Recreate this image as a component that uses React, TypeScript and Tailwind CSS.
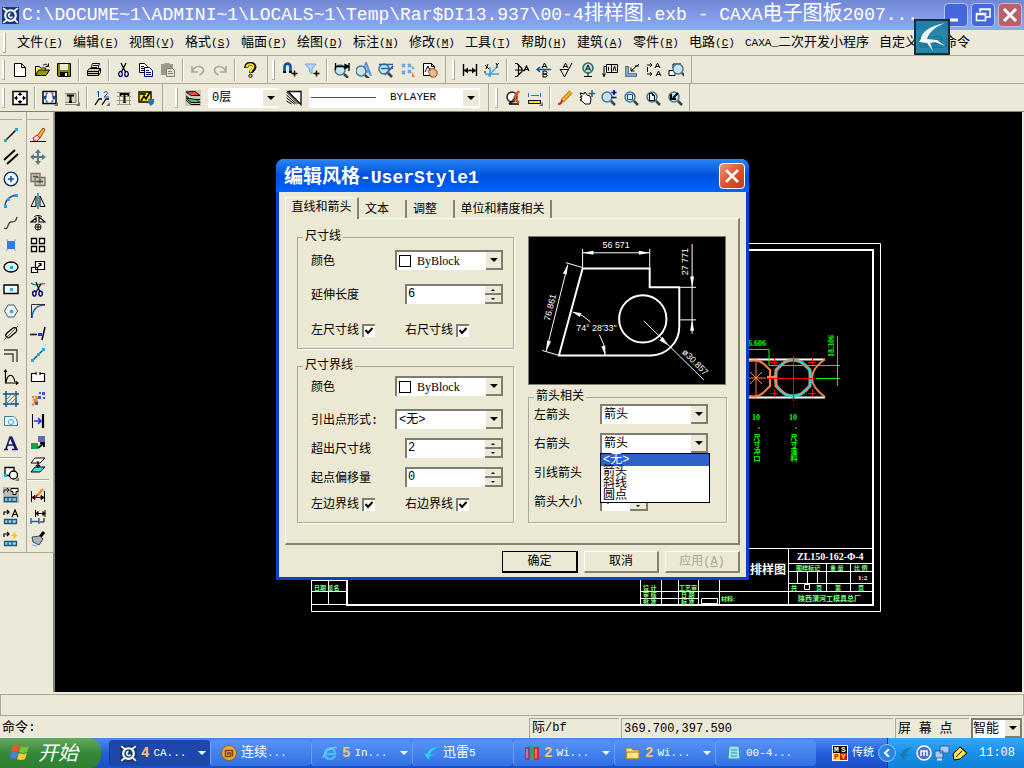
import { ReactNode } from "react";
import clsx from "clsx";

type LineProps = { d: string; c?: string; w?: number; f?: string };

const L = ({ d, c = "#000", w = 1, f = "none" }: LineProps) => (
	<path d={d} stroke={c} strokeWidth={w} fill={f} />
);

const Lens = ({ x = 7, y = 7 }: { x?: number; y?: number }) => (
	<>
		<circle cx={x} cy={y} r="5" fill="#c4e4f0" stroke="#47788c" strokeWidth="1.5" />
		<path d={`M${x + 4} ${y + 4}l4 4`} stroke="#34454c" strokeWidth="2.5" />
	</>
);

const Dot = ({ x, y }: { x: number; y: number }) => (
	<rect x={x - 1} y={y - 1} width="3" height="3" fill="#29a5e8" />
);

const icons: Record<string, ReactNode> = {
	新建: <L d="M2.500 1.500h7l4 4v9h-11zM9.500 1.500v4h4" f="#fff" />,
	打开: (
		<>
			<L d="M1.500 13.500v-9h4l1 1.500h5v2" f="#ffff7a" />
			<L d="M1.500 13.500l3-5.500h11l-3.500 5.500z" f="#9c9400" />
			<L d="M9 3.500c2-2 4-1.500 5 .5M14.500 1.500v3h-3" />
		</>
	),
	保存: (
		<>
			<L d="M1.500 1.500h13v13h-12l-1-1z" f="#848200" />
			<path d="M4 2h8v6H4z" fill="#ece9d8" />
			<path d="M4 10h8v4H4z" fill="#000" />
			<path d="M9 11h2v3H9z" fill="#fff" />
		</>
	),
	打印: (
		<>
			<L d="M4.500 7.500l2-6h7l-2 6" f="#fff" />
			<L d="M1.500 8.500l2-2h11l-2 3v4h-11z" f="#c8c8c0" />
			<L d="M1.500 9.500h11l2-3v4l-2 3M7 3.500h5M6 5.500h5M2 11.500h10" />
			<path d="M8 10h3v1H8z" fill="#ffe100" />
		</>
	),
	剪切: (
		<>
			<L d="M5 1l4.500 9M10 1L5.500 10" w={1.3} />
			<L d="M5 9.500c-3-.5-3 5-.5 5s2-4 .5-5zM10 9.500c3-.5 3 5 .5 5s-2-4-.5-5z" c="#000084" w={1.3} />
		</>
	),
	复制: (
		<>
			<L d="M1.500 1.500h5l3 3v6h-8zM3 4.500h3M3 6.500h5M3 8.500h5" f="#fff" />
			<L d="M6.500 5.500h5l3 3v6h-8zM8 8.500h3M8 10.500h5M8 12.500h5" f="#fff" c="#000084" />
		</>
	),
	粘贴: (
		<>
			<path d="M1 2h3l1-1h4l1 1h3v11H1z" fill="#9c9a88" />
			<L d="M6.500 6.500h6l2 2v6h-8zM8 9.500h4M8 11.500h5" f="#e4e1d0" c="#85836f" />
		</>
	),
	撤销: <L d="M2 4v6h6M2.500 9.500c2-7 11-6 11-1.500 0 2-1 3.500-4 5" c="#aaa897" w={1.6} />,
	重做: <L d="M14 4v6H8M13.500 9.500c-2-7-11-6-11-1.500 0 2 1 3.500 4 5" c="#aaa897" w={1.6} />,
	帮助: (
		<>
			<L d="M4 6c0-6 8.500-5 8.500-1 0 3-3.500 3-3.500 6" w={4} />
			<L d="M4.500 5.500c.5-4.500 7.500-4 7-.5-.5 2.500-3 2.500-3 5.500" c="#ffe600" w={2} />
			<circle cx="8.500" cy="13.800" r="1.600" fill="#ffe600" stroke="#000" />
		</>
	),
	智能捕捉: (
		<>
			<L d="M2.500 11V5c0-4.500 6-4.500 6 0v6" c="#0a4bb5" w={2.6} />
			<path d="M1 9h3v2H1zM7 9h3v2H7z" fill="#000" />
			<L d="M12.500 8.500v6M9.500 11.500h6" w={1.4} />
		</>
	),
	捕捉过滤: (
		<>
			<L d="M1 2h11L8 7v5L5.500 10V7z" c="#6fa6e6" f="#b6d6f8" />
			<L d="M12.500 8.500v6M9.500 11.500h6" w={1.4} />
		</>
	),
	动态查询: (
		<>
			<Lens x={6} y={8} />
			<L d="M1.500 1v7M15 1v8M2 4.500h13M15 4.500l-4-2v4z" f="#000" w={1.3} />
		</>
	),
	文字查找: (
		<>
			<L d="M6 14l4-13 5 13M7.500 9.500h6" c="#5f9ceb" w={2.4} />
			<Lens x={5} y={9} />
		</>
	),
	尺寸查询: (
		<>
			<Lens x={6} y={7} />
			<L d="M1 2.500h14M3 6.500h12M7 13l8-9" c="#2a5fa9" w={1.5} />
		</>
	),
	点选择: (
		<>
			<L d="M2 2l3 3M5 2L2 5M8 2l3 3M11 2L8 5M2 9l3 3M5 9l-3 3M8 8l3 3M11 8l-3 3M12 5l2 2" c="#6ca3ee" w={1.8} />
			<path d="M12 10l3 5h-3z" fill="#f07a32" />
		</>
	),
	拖动图纸: (
		<>
			<L d="M1.500 1.500h8l3 3v9h-11zM9.500 1.500v3h3M3 10l3-6 2 5" f="#fff" />
			<L d="M6 9l2-.5V6l2 1 2-1 1 2 2 1v4l-2 2H9z" f="#f4b78c" c="#9c4a20" />
		</>
	),
	标注: (
		<>
			<L d="M1.500 2v12M14.500 2v12M2 8.500h12" w={1.4} />
			<path d="M2 8.500l4-3v6zM14 8.500l-4-3v6z" />
		</>
	),
	坐标标注: (
		<>
			<L d="M6 15V5M1 12h14" c="#29a5e8" w={1.5} />
			<L d="M4 14l9-9" c="#29a5e8" w={1.3} />
			<L d="M1 3l4 4M4 2l-2 5M12 1l1 2 2-2M13 3v3M1 9v2" />
		</>
	),
	倒角标注: <L d="M1 1.500h2l5 5v3l-5 5H1M4.500 2v12M1 8h7l3 1M10 9l2.500-5L15 9M11 7.500h3" w={1.2} />,
	引出说明: (
		<>
			<L d="M6 6l2.500-5L11 6M7 4.500h3M7 9v6h3l1-1.500-1-1.500H7h3l1-1.500L10 9z" />
			<L d="M1 7.500h14M4 5L1 7.500 4 10" c="#0a4bb5" w={1.3} />
		</>
	),
	粗糙度: <L d="M2 7l4.500 8L14 1M2 7.500h9M5 6l2.500-5L10 6M6 4.500h3" />,
	基准代号: (
		<>
			<circle cx="8" cy="6" r="5" fill="#b6e2d6" stroke="#246a77" strokeWidth="1.500" />
			<L d="M5.500 8.500L8 3l2.500 5.500M6.500 7h3M8 11v3M4 14.500h8" />
		</>
	),
	形位公差: <L d="M4.500 2.500h11v8h-11zM9.500 3v7M5 4.500H2v10M.5 11.500L2 14.500l1.500-3M6.500 8.500V5M11 9l1.500-5L14 9" />,
	焊接符号: (
		<>
			<L d="M3 4v9h10" c="#2d5f91" w={3.5} />
			<L d="M3 5v8h9" c="#d9ecfa" />
			<L d="M15 2L7 9M7 5.500V9h3.500M11 4h4" />
		</>
	),
	剖切符号: <L d="M1 3h5M4 1l2 2-2 2M1 12h5M4 10l2 2-2 2M9 6l2.500-5L14 6M10 4.500h3M10 14l2.500-5 2.500 5M11 12.500h3M1.500 5v5" />,
	局部放大: (
		<>
			<L d="M1 8.500h6v5H1zM5 6V2h8" f="#fff" />
			<Lens x={10} y={7} />
		</>
	),
	全屏显示: (
		<>
			<L d="M1 1.500h14v13H1z" f="#fff" w={1.5} />
			<L d="M8 3v10M3 8h10" />
			<path d="M8 2l2.500 3h-5zM8 14l2.500-3h-5zM2 8l3-2.500v5zM14 8l-3-2.500v5z" />
			<path d="M6 6h4v4H6z" fill="#fff" />
		</>
	),
	图幅设置: (
		<>
			<L d="M1 1.500h13v12H1z" f="#fff" w={1.5} />
			<path d="M6 2l-1 3-2-1zM9 2l1 3 2-1zM6 13l-1-3-2 1zM9 13l1-3 2 1zM2 6l3-1-1 5-2-1zM13 6l-3-1 1 5 2-1z" fill="#174a9b" />
			<path d="M16 12v4h-4z" fill="#777" />
		</>
	),
	标题栏: (
		<>
			<L d="M1 3.500h11v9H1M14.500 1v14M1 14.500h14" c="#85836f" f="#d8d5c4" />
			<L d="M3 5.500h7M6.500 5v7M5 12h3" w={2} />
			<path d="M16 12v4h-4z" fill="#777" />
		</>
	),
	序号: (
		<>
			<L d="M3 2.500L4.500 1v6M10 3c1-3 5-1 3 1l-3 3h5" c="#0a4bb5" />
			<L d="M1 15l4-6h3M8 15l4-6h3" w={1.3} />
			<path d="M16 12v4h-4z" fill="#777" />
		</>
	),
	明细表: (
		<>
			<L d="M1 2.500h14M1 6.500h14M1 10.500h14M1 14.500h14M3.500 2v13M13.500 2v13" c="#9a9888" />
			<path d="M4 3h9v3h-1l-1-1H9.500v7l1 1h-4l1-1V5H6L5 6H4z" />
		</>
	),
	图库: (
		<>
			<L d="M1 2h12v10H1z" f="#ffee00" w={1.4} />
			<L d="M3 11l3-5 2 3 4-7M2 4h6" w={1.6} />
			<path d="M10 9h6v4l-3 3-3-3z" fill="#2c72ad" />
		</>
	),
	图层: (
		<>
			<path d="M0 0h16v16H0z" fill="#c9c6b6" />
			<L d="M1 2l9-.5 5 4H6z" f="#f3504c" />
			<L d="M1 6l5 3.500h9" f="#fff" />
			<L d="M1 8l5 4.500h9l-3-3z" f="#44c268" />
			<L d="M1 10l5 4.500h9" />
		</>
	),
	线型: (
		<>
			<L d="M2 1.500h13v13z" f="#fff" w={1.3} />
			<L d="M.5 2l12 12M.5 5l10 9M.5 8l8 6M.5 11l5 3" />
		</>
	),
	重画: (
		<>
			<circle cx="7" cy="7" r="5" fill="#fff" stroke="#222" strokeWidth="1.500" />
			<L d="M10 8l-6 6M4 14h10" w={1.3} />
			<L d="M9 8l5-7M10 9l4 4" c="#d25b1f" w={2.5} />
		</>
	),
	测量: (
		<>
			<L d="M1.500 3v4M13.500 3v4M4 5.500h8" c="#2a6fd0" />
			<L d="M1.500 10.500h12v3h-12z" f="#ffe600" />
			<path d="M16 12v4h-4z" fill="#777" />
		</>
	),
	画笔: (
		<>
			<L d="M5 11l9-9" c="#9a5a10" w={4} />
			<L d="M5 11l9-9" c="#ffb52d" w={2.5} />
			<L d="M1 14c3 0 4-1 4-4" c="#d02020" w={2} />
		</>
	),
	平移: (
		<>
			<L d="M1 3l4 1 1-2 2 3 3 1 1 3-1 5H6L3 11l-2-1 2-1-2-2h2z" f="#fff" />
			<L d="M13 0v7M9.500 3.500h7" c="#2d5f71" w={1.5} />
		</>
	),
	动态缩放: (
		<>
			<Lens x={6} y={7} />
			<L d="M13 0v5M10.500 2.500h5M10.500 7.500h5" c="#000084" w={1.6} />
		</>
	),
	窗口缩放: (
		<>
			<Lens />
			<L d="M4.500 4.500h5v5h-5z" c="#174a9b" f="#e6f6fb" />
		</>
	),
	显示全部: (
		<>
			<Lens />
			<L d="M4.500 3.500h3l2 2v5h-5zM7.500 3.500v2h2" f="#e6f6fb" />
		</>
	),
	显示回溯: (
		<>
			<Lens />
			<L d="M11 3L6 8M4 4v5h5" w={2} />
		</>
	),
	直线: (
		<>
			<L d="M2 14L14 2" w={1.5} />
			<Dot x={2} y={13} />
			<Dot x={13} y={2} />
		</>
	),
	平行线: <L d="M1 11L12 1M4 15L15 5" w={1.8} />,
	圆: (
		<>
			<circle cx="8" cy="8" r="6.800" fill="#eef8ff" stroke="#0a2d68" strokeWidth="1.300" />
			<L d="M8 5v6M5 8h6" c="#0a4bb5" w={1.6} />
		</>
	),
	圆弧: (
		<>
			<L d="M2 14C2 7 7 3 14 2" c="#174a9b" w={1.4} />
			<Dot x={2} y={13} />
			<Dot x={5} y={6} />
			<Dot x={13} y={2} />
		</>
	),
	样条: <L d="M1 13c5 3 3-6 7-6s5-1 6-5" c="#444" w={1.3} />,
	点: (
		<>
			<path d="M4 4h8v8H4z" fill="#2f7af0" />
			<L d="M3 3h2M11 3h2M3 13h2M11 13h2" c="#6da3ee" />
		</>
	),
	椭圆: (
		<>
			<ellipse cx="8" cy="8" rx="7" ry="5" fill="#dff1fa" stroke="#000" strokeWidth="1.300" />
			<Dot x={8} y={8} />
		</>
	),
	矩形: (
		<>
			<L d="M1 4h14v8.500H1z" f="#eef8ff" w={1.4} />
			<Dot x={8} y={8} />
		</>
	),
	正多边形: (
		<>
			<L d="M5 2h6l3.500 6L11 14H5L1.500 8z" f="#eef8ff" c="#465b68" />
			<Dot x={8} y={8} />
		</>
	),
	中心线: (
		<>
			<L d="M4 8l6-5c3-1 5 1 3 4l-6 5c-3 2-6-1-3-4z" w={1.2} />
			<L d="M1 15L15 1" c="#555" />
		</>
	),
	等距线: <L d="M1 3h13v12M1 7h9v8" c="#444" w={1.4} />,
	公式曲线: <L d="M2.500 1v13H15M1 3l1.500-2L4 3M13 12.500l2 1.500-2 1.500M3 13c2-9 7-9 9 0" w={1.2} />,
	剖面线: (
		<>
			<L d="M3 0v16M13 0v16M0 3h16M0 13h16" c="#0d4f7f" w={1.4} />
			<L d="M3 9l6-6M3 13L13 3M7 13l6-6" c="#3c94bd" />
		</>
	),
	填充: (
		<>
			<L d="M1.500 3.500h8c3 0 5 3 5 9h-13z" f="#e7f5fd" c="#4c7890" />
			<circle cx="8" cy="9" r="2.500" fill="#fff" stroke="#29a5e8" />
		</>
	),
	文字: (
		<>
			<L d="M3 14l4-12h1l5 12M5 10h6" c="#17176b" w={1.6} />
			<L d="M8 2l5 12" c="#17176b" w={2.8} />
			<L d="M1 14.500h4M9 14.500h6" c="#17176b" w={1.4} />
		</>
	),
	块: (
		<>
			<L d="M2 2.500h9v8H2z" f="#fff" w={1.3} />
			<circle cx="10.500" cy="10" r="4" fill="#fff" stroke="#000" strokeWidth="1.300" />
			<Dot x={2} y={10} />
			<path d="M16 12v4h-4z" fill="#777" />
		</>
	),
	提取图符: (
		<>
			<path d="M0 0h16v16H0z" fill="#bdbab0" />
			<L d="M1 6V3h5M4 1l2 2-2 2M8 1.500h7v3h-2v3h-3v-3H8z" f="#fff" />
			<L d="M1.500 10.500h12v4h-12zM5 10.500v4M9 10.500v4" c="#1b5b7f" f="#8fd9ee" w={1.3} />
		</>
	),
	标注编辑: (
		<>
			<L d="M1 6V3h5M4 1l2 2-2 2M9 8l3-7 3 7M10 5.500h4" w={1.2} />
			<L d="M1.500 10.500h12v4h-12zM5 10.500v4M9 10.500v4" c="#1b5b7f" f="#8fd9ee" w={1.3} />
		</>
	),
	驱动图符: (
		<>
			<L d="M1 6V3h5M4 1l2 2-2 2" w={1.2} />
			<path d="M13 0L8 5h3L9 9l6-5h-3z" fill="#ffc400" />
			<L d="M1.500 10.500h12v4h-12zM5 10.500v4M9 10.500v4" c="#1b5b7f" f="#8fd9ee" w={1.3} />
		</>
	),
	删除: (
		<>
			<L d="M7 9l6-8 2 1.500L10 11z" f="#ffb52d" c="#8c4a00" />
			<L d="M3 11l4-3 3 3-3 3H4z" f="#ffd0c4" c="#b02a2a" />
			<L d="M0 14.500h16" />
		</>
	),
	移动: (
		<>
			<L d="M8 2v12M2 8h12" c="#5a7b83" w={2} />
			<path d="M8 0l3 4H5zM8 16l3-4H5zM0 8l4-3v6zM16 8l-4-3v6z" fill="#5a7b83" />
		</>
	),
	平移复制: (
		<>
			<L d="M1 2.500h9v8H1zM5 6.500h10v8H5z" c="#77756a" f="#c9c6b6" w={1.3} />
			<L d="M7 10.500h6M10 8.500v4M3 5.500h5" c="#55534a" w={1.3} />
		</>
	),
	镜像: (
		<>
			<L d="M6 3v10.500H1zM10 3v10.500h5z" f="#e5eef2" />
			<L d="M8 0v16" c="#108090" w={1.4} />
		</>
	),
	旋转: (
		<>
			<L d="M1 7l5-4v4zM9 2v5h6z" f="#fff" w={1.2} />
			<L d="M4 2c2-2 6-2 8 0" />
			<circle cx="8" cy="12" r="3" fill="none" stroke="#000" />
			<L d="M8 9.500v5M5.500 12h5" />
		</>
	),
	阵列: <L d="M1.500 1.500h5v5h-5zM9.500 1.500h5v5h-5zM1.500 9.500h5v5h-5zM9.500 9.500h5v5h-5z" f="#fff" w={1.3} />,
	缩放: <L d="M5.500 2.500h9v8h-9zM1.500 8.500h6v5h-6zM8 8l3-3M8.500 4.500H11v2.500" f="#fff" w={1.2} />,
	裁剪: (
		<>
			<L d="M1 2c5 5 9-1 14 1" c="#108090" w={1.3} />
			<L d="M6 1l4 10M11 3L6 11" w={1.2} />
			<L d="M5 10c-3 0-3 4-1 5s3-4 1-5zM10 10c3 0 3 4 1 5s-3-4-1-5z" c="#000084" w={1.4} />
		</>
	),
	过渡: (
		<>
			<L d="M2 15C2 7 7 2 15 2" c="#1763c5" w={1.6} />
			<L d="M1.500 15V1.500H15" c="#333" strokeDasharray="1 1" {...{}} />
		</>
	),
	齐边: (
		<>
			<L d="M0 9.500h7M12 15l3-13" w={1.5} />
			<path d="M8 8h4v3H8z" fill="#1737e5" />
		</>
	),
	拉伸: (
		<>
			<L d="M2 14L14 2" c="#0c5f67" w={1.4} />
			<Dot x={2} y={13} />
			<Dot x={8} y={7} />
			<Dot x={13} y={2} />
		</>
	),
	打断: <L d="M6 4.500H1.500v8h13v-8H10M6 3v3M10 3v3" f="#fff" w={1.2} />,
	打散: (
		<>
			<L d="M2 6h2M6 5l1 3M3 9l4-1M4 12l3-3M7 10v3M2 14l2-1" c="#ee7b10" w={2.2} />
			<path d="M8 5h3v3H8zM12 1h3v3h-3zM9 1h2v2H9zM13 6h2v2h-2zM5 11h3v3H5z" fill="#3359d7" />
		</>
	),
	延伸: (
		<>
			<L d="M2.500 1v14" />
			<L d="M13 1v14" w={2.2} />
			<L d="M4 8h7M8 5l3 3-3 3" c="#1737e5" w={1.6} />
		</>
	),
	格式刷: (
		<>
			<path d="M1 8h7v6H1z" fill="#16a04a" />
			<path d="M8 1h7v6H8z" fill="#636baf" />
			<L d="M8 13l6-5M10 8h4v4" w={1.8} />
		</>
	),
	图层转换: (
		<>
			<L d="M5 1h10l-5 5H1z" f="#fff" />
			<L d="M5 10h10l-5 5H1z" f="#3fe0e6" />
			<L d="M8 4v6M6 8l2 2 2-2" w={1.3} />
		</>
	),
	标注修改: (
		<>
			<L d="M1.500 4v11M14.500 4v11M2 10.500h12M2 10.500l3-2v4zM14 10.500l-3-2v4z" f="#000" />
			<L d="M7 9l6-7" c="#ee8a30" w={2.5} />
			<L d="M5 11l2-3" c="#c02020" w={2} />
		</>
	),
	尺寸驱动: (
		<>
			<L d="M5.500 1v7M15 1v7M6 4.500h9M6 4.500l2-2v4zM15 4.500l-2-2v4z" f="#000" />
			<L d="M1 9v6M9 9v6M1 12.500h8" c="#1763c5" w={1.4} />
			<L d="M14 9v4h-4" />
		</>
	),
	特性匹配: (
		<>
			<L d="M10 6l4-5" w={3} />
			<L d="M2 6l8-1 3 3-4 6-6-3z" f="#a5b4bc" c="#3b4b53" />
			<L d="M2 14l5 1" c="#7aa6f0" />
		</>
	),
};

const IconButton = ({ name }: { name: string }) => (
	<button aria-label={name} className="flex size-[22px] shrink-0 items-center justify-center">
		<svg viewBox="0 0 16 16" className="size-4">
			{icons[name]}
		</svg>
	</button>
);

const Sep = () => (
	<span className="mx-[3px] h-[22px] w-0.5 shrink-0 border-l border-[#aca899] bg-white" />
);

const Grip = () => (
	<span className="mr-1 h-5 w-[3px] shrink-0 border-r border-b border-[#aca899] bg-white" />
);

const Group = ({ names, className }: { names: string[]; className: string }) => (
	<div className={clsx("flex h-full items-center border-r border-[#aca899]", className)}>
		<Grip />
		{names.map((n, i) => (n === "|" ? <Sep key={i} /> : <IconButton key={i} name={n} />))}
	</div>
);

const SideBar = ({ names }: { names: string[] }) => (
	<div className="flex flex-col items-center border-r border-[#aca899] pt-1 pr-1">
		<span className="mb-1 h-1 w-full border-b border-[#b5b27e]" />
		{names.map((n, i) =>
			n === "|" ? (
				<span key={i} className="my-[3px] h-0.5 w-full border-t border-[#aca899] bg-white" />
			) : (
				<IconButton key={i} name={n} />
			)
		)}
	</div>
);

const isCjk = (s: string) => /[^\x00-\xff]/.test(s);

/* Latin runs are set a bit smaller so they take half the width of a Han glyph */
const Mixed = ({ text, latin, cjk }: { text: string; latin: string; cjk: string }) => (
	<>
		{text.split(/([^\x00-\xff]+)/).map((part, i) => (
			<span key={i} className={isCjk(part) ? cjk : latin}>
				{part}
			</span>
		))}
	</>
);

const menus: [string, string][] = [
	["文件", "F"],
	["编辑", "E"],
	["视图", "V"],
	["格式", "S"],
	["幅面", "P"],
	["绘图", "D"],
	["标注", "N"],
	["修改", "M"],
	["工具", "T"],
	["帮助", "H"],
	["建筑", "A"],
	["零件", "R"],
	["电路", "C"],
];

const Arrow = () => (
	<span className="flex h-full w-[17px] shrink-0 items-center justify-center border-r-2 border-b-2 border-[#7f7d70] bg-[#ece9d8]">
		<svg viewBox="0 0 8 4" className="h-1 w-2">
			<path d="M0 0h8L4 4z" />
		</svg>
	</span>
);

const Combo = ({
	id,
	value,
	swatch,
	options = [],
}: {
	id: string;
	value: string;
	swatch?: boolean;
	options?: string[];
}) => (
	<div className="flex h-5 w-[108px] items-center border-t-2 border-l-2 border-[#7f7d70] bg-white">
		{swatch && <span className="ml-0.5 size-3 shrink-0 border border-black" />}
		<select
			id={id}
			defaultValue={value}
			className={clsx(
				"h-full min-w-0 flex-1 appearance-none bg-transparent outline-none",
				swatch ? "pl-1.5 font-['Liberation_Serif',serif]" : "pl-0.5"
			)}>
			{[value, ...options].map((o) => (
				<option key={o}>{o}</option>
			))}
		</select>
		<Arrow />
	</div>
);

const Spin = ({ id, value, className }: { id: string; value: string; className: string }) => (
	<div className={clsx("flex h-5 border-t-2 border-l-2 border-[#7f7d70] bg-white", className)}>
		<input id={id} defaultValue={value} className="h-4 min-w-0 flex-1 pl-px outline-none" />
		<span className="flex w-[18px] shrink-0 flex-col">
			{["M0 2h4L2 0z", "M0 0h4L2 2z"].map((d, i) => (
				<button
					key={d}
					aria-label={i ? "减" : "加"}
					className="flex flex-1 items-center justify-center border-r-2 border-b-2 border-[#7f7d70] bg-[#ece9d8]">
					<svg viewBox="0 0 4 2" className="h-0.5 w-1">
						<path d={d} />
					</svg>
				</button>
			))}
		</span>
	</div>
);

const Row = ({ id, label, children }: { id: string; label: string; children: ReactNode }) => (
	<div className="flex h-[22px] items-center justify-between">
		<label htmlFor={id} className="pt-[3px]">
			{label}
		</label>
		{children}
	</div>
);

const Check = ({ label }: { label: string }) => (
	<label className="flex w-[94px] items-center gap-[3px]">
		<span className="pt-0.5">{label}</span>
		<span className="grid size-[13px] border-t-2 border-l-2 border-[#7f7d70] bg-white">
			<input
				type="checkbox"
				defaultChecked
				className="peer col-start-1 row-start-1 size-full appearance-none"
			/>
			<svg
				viewBox="0 0 10 10"
				className="pointer-events-none invisible col-start-1 row-start-1 size-[10px] peer-checked:visible">
				<path d="M1.500 4l2.500 3 4.500-5" fill="none" stroke="#000" strokeWidth="2" />
			</svg>
		</span>
	</label>
);

const Box = ({
	title,
	className,
	children,
}: {
	title: string;
	className: string;
	children: ReactNode;
}) => (
	<fieldset
		className={clsx("min-w-0 border border-[#aca899] pl-[5px] shadow-[1px_1px_0_#fff]", className)}>
		<legend className="h-3 px-0.5 leading-3">{title}</legend>
		{children}
	</fieldset>
);

const Preview = () => (
	<svg
		viewBox="0 0 198 149"
		className="h-[149px] w-[198px] border border-[#7f7d70] bg-black font-['Liberation_Sans',sans-serif]"
		stroke="#fff"
		fill="none">
		<path d="M54 32h68v19h30v40a29 29 0 0 1-28 29H30z" strokeWidth="2" />
		<circle cx="115" cy="83" r="24" strokeWidth="2" />
		<path d="M54 32V12M122 32V12M54 16h68M165 7v91M153 51h16M153 84h16M39 28L17 116M37 26l17 5M13 115l17 5M44 76q10 2 18 10M71 99q6 10 6 21M116 85l61 60" />
		<g fill="#fff" stroke="none">
			<path d="M54 16l11-2v4zM122 16l-11-2v4zM165 51l-2-11h4zM165 84l-2 11h4zM39 28l-5 9 4 1zM17 116l1-11 4 1zM44 76l9 1-2 4zM77 120l-4-9 4-1zM141 110l-9-5 3-4z" />
			<g fontSize="9" textAnchor="middle">
				<text x="88" y="11">56 571</text>
				<text transform="translate(161 25) rotate(-90)">27 771</text>
				<text transform="translate(24 72) rotate(-76)">76.861</text>
				<text x="68" y="95">74° 28'33"</text>
				<text transform="translate(166 129) rotate(45)">ø30.857</text>
			</g>
		</g>
	</svg>
);

const Drawing = () => (
	<svg
		viewBox="0 0 570 369"
		className="absolute top-[131px] left-64 h-[369px] w-[570px] font-['Liberation_Serif','Noto_Sans_CJK_SC',serif]"
		fill="none"
		stroke="#fff">
		<path d="M.5.5h569v368H.5z" />
		<path d="M36 7h526v355H36z" strokeWidth="2" />
		<path d="M0 348.500h36M0 361.500h36M17.500 337v25M.5 337.500h36" />
		<path d="M438 305.500h124M477.500 305v57M477 320.500h85M477 328.500h85M477 340.500h85M329 348.500h233M515.500 320v28M539.500 320v28M486.500 328v12M496.500 328v12M506.500 328v12M329.500 337v25M350.500 337v25M367.500 337v25M387.500 337v25M408.500 337v25M329 355.500h58M390.500 355.500h16v5h-16zM493.500 341.500h5v5h-5z" />
		<path d="M438 116.500h76M438 154.500h76" strokeWidth="2" />
		<g stroke="#ff7f40" strokeWidth="2">
			<path d="M438 118q9-2 15 3l6 6v16l-6 6q-6 6-15 4M514 116q-26 19 0 38M456 134h10" />
			<path d="M465 127v16l9 8q8 4 16 0l9-8v-16l-9-8q-8-4-16 0z" strokeWidth="3" />
			<path d="M438 135h17M445 115v41M439 129l12 12M439 141l12-12" strokeWidth="1" />
		</g>
		<circle cx="482" cy="135" r="18" stroke="#00e8f0" strokeWidth="3" strokeDasharray="1 1" />
		<path
			d="M456 135.500h48M482.500 113v45M459 119.500h8M463.500 115v8M497 119.500h8M501.500 115v8M459 150.500h8M463.500 146v8M497 150.500h8M501.500 146v8"
			stroke="#f00"
		/>
		<path d="M438 106.500h20v16h71M526.500 93v50M505 135.500h24" stroke="#0f0" />
		<g fill="#0f0" stroke="none" fontSize="8" fontWeight="bold">
			<text x="437" y="103">6.606</text>
			<text transform="translate(523 114) rotate(-90)">18.306</text>
			<text x="441" y="177">10</text>
			<text x="478" y="177">10</text>
			<g className="[writing-mode:vertical-rl]" fontSize="7">
				<text x="445" y="184">、尺寸冲口</text>
				<text x="482" y="184">、尺寸落料</text>
			</g>
		</g>
		<g fill="#7dff7d" stroke="none" fontSize="6" fontWeight="bold">
			<text x="485" y="327">图样标记</text>
			<text x="519" y="327">重 量</text>
			<text x="543" y="327">比 例</text>
			<text x="480" y="347">共</text>
			<text x="505" y="347">页</text>
			<text x="524" y="347">第</text>
			<text x="547" y="347">页</text>
			<text x="332" y="347">设 计</text>
			<text x="332" y="354">审 核</text>
			<text x="332" y="361">批 准</text>
			<text x="368" y="347">工艺审</text>
			<text x="370" y="354">日 期</text>
			<text x="370" y="361">标 准</text>
			<text x="410" y="358">材料:</text>
			<text x="3" y="347">日期 签名</text>
			<text x="487" y="358" fontSize="7">
				陕西渭河工模具总厂
			</text>
		</g>
		<g fill="#fff" stroke="none" fontWeight="bold">
			<text x="486" y="317" fontSize="10">
				ZL150-162-Φ-4
			</text>
			<text x="427" y="331" fontSize="12">
				复排样图
			</text>
			<text x="547" y="337" fontSize="7">
				1:2
			</text>
		</g>
	</svg>
);

const Dialog = () => (
	<div
		role="dialog"
		aria-label="编辑风格-UserStyle1"
		className="absolute top-[159px] left-[276px] w-[473px] rounded-t-lg border-x-3 border-b-3 border-[#0a3fd0] bg-[#ebe8d3] font-['Liberation_Mono','Noto_Sans_CJK_SC',monospace] text-xs">
		<header className="-mx-[3px] flex h-[33px] items-center justify-between rounded-t-lg bg-linear-to-b from-[#2a86f8] via-[#0050dc] to-[#0064ff] px-2 pr-1 font-bold text-white">
			<h2 className="pt-1 whitespace-nowrap">
				<Mixed text="编辑风格-UserStyle1" latin="text-lg" cjk="text-[19px]" />
			</h2>
			<button
				aria-label="关闭"
				className="flex size-[26px] items-center justify-center rounded border border-white bg-linear-to-br from-[#f0957a] via-[#e0532c] to-[#c03a10]">
				<svg viewBox="0 0 14 14" className="size-[14px]">
					<path d="M1 1l12 12M13 1L1 13" stroke="#fff" strokeWidth="2.500" />
				</svg>
			</button>
		</header>

		<div className="px-1.5 pt-[5px] pb-1">
			<div role="tablist" className="flex h-[21px] items-end">
				<button
					role="tab"
					aria-selected="true"
					className="mb-[-1px] h-[22px] w-[74px] border-t border-r-2 border-l border-t-white border-r-[#85836f] border-l-white bg-[#ebe8d3] pb-0.5">
					直线和箭头
				</button>
				<button role="tab" className="h-[18px] w-12 border-r-2 border-[#85836f] pt-px pr-2.5">
					文本
				</button>
				<button role="tab" className="h-[18px] w-12 border-r-2 border-[#85836f] pt-px pr-2.5">
					调整
				</button>
				<button role="tab" className="h-[18px] w-[97px] border-r-2 border-[#85836f] pt-px">
					单位和精度相关
				</button>
			</div>

			<div className="flex justify-between border-t border-r-2 border-b-2 border-l border-t-white border-r-[#85836f] border-b-[#85836f] border-l-white pt-3 pr-[11px] pb-5 pl-[11px]">
				<div className="flex w-[217px] flex-col gap-[11px]">
					<Box title="尺寸线" className="h-[118px] pr-2.5">
						<div className="flex flex-col gap-3 pt-1.5 pl-2">
							<Row id="color1" label="颜色">
								<Combo id="color1" value="ByBlock" swatch />
							</Row>
							<Row id="ext" label="延伸长度">
								<Spin id="ext" value="6" className="w-[98px]" />
							</Row>
							<div className="flex pt-1">
								<Check label="左尺寸线" />
								<Check label="右尺寸线" />
							</div>
						</div>
					</Box>
					<Box title="尺寸界线" className="h-[163px] pr-2.5">
						<div className="flex flex-col gap-[7px] pt-[3px] pl-2">
							<Row id="color2" label="颜色">
								<Combo id="color2" value="ByBlock" swatch />
							</Row>
							<div className="pt-1">
								<Row id="shape" label="引出点形式:">
									<Combo id="shape" value="<无>" />
								</Row>
							</div>
							<Row id="over" label="超出尺寸线">
								<Spin id="over" value="2" className="w-[98px]" />
							</Row>
							<Row id="offset" label="起点偏移量">
								<Spin id="offset" value="0" className="w-[98px]" />
							</Row>
							<div className="flex">
								<Check label="左边界线" />
								<Check label="右边界线" />
							</div>
						</div>
					</Box>
				</div>

				<div className="flex w-[199px] flex-col gap-1.5 pt-[5px]">
					<Preview />
					<Box title="箭头相关" className="h-[132px] pr-[18px]">
						<div className="flex flex-col gap-[7px]">
							<Row id="left" label="左箭头">
								<Combo id="left" value="箭头" />
							</Row>
							<Row id="right" label="右箭头">
								<div className="relative">
									<Combo id="right" value="箭头" options={["<无>", "斜线", "圆点"]} />
									<ul
										role="listbox"
										aria-label="右箭头"
										className="absolute top-full left-0 w-[110px] border border-black bg-white leading-3">
										<li
											role="option"
											aria-selected="true"
											className="bg-[#2f62c8] pl-0.5 text-white">
											{"<无>"}
										</li>
										{["箭头", "斜线", "圆点"].map((o) => (
											<li key={o} role="option" aria-selected="false" className="pl-0.5">
												{o}
											</li>
										))}
									</ul>
								</div>
							</Row>
							<Row id="lead" label="引线箭头">
								<Combo id="lead" value="箭头" />
							</Row>
							<Row id="size" label="箭头大小">
								<Spin id="size" value="4" className="mr-[60px] w-12" />
							</Row>
						</div>
					</Box>
				</div>
			</div>

			<footer className="flex justify-end gap-1.5 pt-1.5">
				<button className="h-[22px] w-[76px] border border-r-2 border-b-2 border-black pt-px leading-4">
					确定
				</button>
				<button className="h-[22px] w-[75px] border-t border-r-2 border-b-2 border-l border-t-white border-r-[#85836f] border-b-[#85836f] border-l-white pt-px leading-4">
					取消
				</button>
				<button
					disabled
					className="h-[22px] w-[75px] border-t border-r-2 border-b-2 border-l border-t-white border-r-[#85836f] border-b-[#85836f] border-l-white pt-px leading-4 text-[#aca899]">
					应用(<u>A</u>)
				</button>
			</footer>
		</div>
	</div>
);

const CaxaLogo = () => (
	<svg viewBox="0 0 16 16" className="size-[17px] shrink-0">
		<path d="M0 0h16v16H0z" fill="#1a3a78" />
		<circle cx="8" cy="8" r="5" fill="none" stroke="#fff" strokeWidth="2" />
		<path d="M1 1l4 3M15 1l-4 3M1 15l4-3M15 15l-4-4M8 6a2 2 0 1 0 2 3" fill="none" stroke="#fff" strokeWidth="1.500" />
	</svg>
);

const taskIcons: Record<string, ReactNode> = {
	msg: (
		<>
			<circle cx="8" cy="8" r="7.500" fill="#e5aa45" stroke="#94601b" />
			<path d="M4.500 5.500h7v6M4.500 5v6.500h5V8H7v2" fill="none" stroke="#7a4310" strokeWidth="1.500" />
		</>
	),
	ie: (
		<>
			<path d="M3 9h10c0-8-10-7-10 0 0 6 8 6 10 2" fill="none" stroke="#46c0f5" strokeWidth="2.500" />
			<path d="M1 13C2 7 10 1 15 3" fill="none" stroke="#a8d8f5" />
		</>
	),
	bird: <path d="M15 2C7 3 5 6 4 9L1 8l3 5 3 2-1-3 6-3-5 1c1-4 4-6 8-8z" fill="#2bd0ee" />,
	rar: (
		<>
			<path d="M1 2h5v13H1z" fill="#a0338b" />
			<path d="M6 1h4v14H6z" fill="#32a06b" />
			<path d="M10 2h5v13h-5z" fill="#d12c3c" />
			<path d="M3 4v9M12 4v9" stroke="#f5b0c0" />
		</>
	),
	folder: (
		<path d="M1 3h5l2 2h6v9H1zM2 7h13l-1 7H1z" fill="#ffe28a" stroke="#a67a16" />
	),
	note: (
		<>
			<path d="M3 1h10l1 13H2z" fill="#9de0ee" stroke="#3b8fa6" />
			<path d="M5 5h6M5 8h6M5 11h6" stroke="#3b8fa6" />
		</>
	),
};

const tasks = [
	{ icon: "caxa", count: "4", text: "CA...", more: true, active: true },
	{ icon: "msg", text: "连续..." },
	{ icon: "ie", count: "5", text: "In...", more: true },
	{ icon: "bird", text: "迅雷5" },
	{ icon: "rar", count: "2", text: "Wi...", more: true },
	{ icon: "folder", count: "2", text: "Wi...", more: true },
	{ icon: "note", text: "00-4..." },
];

const TaskBar = () => (
	<footer className="flex h-[30px] shrink-0 bg-linear-to-b from-[#4a8cf0] via-[#245edc] to-[#1c4fc8] text-white">
		<button className="flex w-[101px] items-center gap-2 rounded-r-xl bg-linear-to-b from-[#62ab5e] via-[#35893a] to-[#2f7f31] pl-2.5 text-xl leading-[30px] italic">
			<svg viewBox="0 0 20 18" className="h-[18px] w-5">
				<path d="M3 2q4-2 7 0L8 8Q5 6 1 8z" fill="#f0562a" />
				<path d="M11 2q4 2 8 0l-2 6q-4 2-8 0z" fill="#7cc23c" />
				<path d="M1 9q4-2 7 0l-2 6q-3-2-6 0z" fill="#4a7df0" />
				<path d="M9 9q4 2 8 0l-2 6q-4 2-8 0z" fill="#fcc92e" />
			</svg>
			<span className="pt-1">开始</span>
		</button>
		<nav className="ml-2 flex flex-1 items-center py-0.5">
			{tasks.map((t, i) => (
				<button
					key={i}
					className={clsx(
						"flex h-[26px] w-[101px] items-center gap-1 rounded-sm border-l pr-1 pl-2.5",
						t.active
							? "border-[#123a90] bg-[#1c48ac]"
							: "border-[#6ba0fa] bg-linear-to-b from-[#5594f5] to-[#3270e4]"
					)}>
					{t.icon === "caxa" ? (
						<CaxaLogo />
					) : (
						<svg viewBox="0 0 16 16" className="size-4 shrink-0">
							{taskIcons[t.icon]}
						</svg>
					)}
					{t.count && <b className="text-sm text-[#ffc66b]">{t.count}</b>}
					<span className="flex-1 text-left whitespace-nowrap">
						<Mixed text={t.text} latin="text-[11px]" cjk="text-[13px]" />
					</span>
					{t.more && (
						<svg viewBox="0 0 8 4" className="h-1 w-2 shrink-0">
							<path d="M0 0h8L4 4z" fill="#fff" />
						</svg>
					)}
				</button>
			))}
		</nav>
		<div className="flex items-center gap-1 pr-1">
			<div className="grid size-4 grid-cols-2 border border-white bg-black text-center text-[8px] leading-[7px] font-bold">
				<span>M</span>
				<span>S</span>
				<span className="bg-[#ffe600] text-[#d01010]">P</span>
				<span className="bg-[#d01010] text-[#ffe600]">Y</span>
			</div>
			<span className="text-[11px]">传统</span>
		</div>
		<div className="flex w-[146px] items-center gap-0.5">
			<button
				aria-label="显示隐藏的图标"
				className="z-10 flex size-[18px] shrink-0 items-center justify-center rounded-full border border-[#8fc4fa] bg-[#2b83e6]">
				<svg viewBox="0 0 8 8" className="size-2">
					<path d="M6 0L2 4l4 4" fill="none" stroke="#fff" strokeWidth="2" />
				</svg>
			</button>
			<div className="-ml-[11px] flex h-full flex-1 items-center gap-0.5 border-l border-[#0b3a90] bg-linear-to-b from-[#38a8f4] via-[#1690ea] to-[#1182d8] pl-2.5">
				<svg viewBox="0 0 16 16" className="size-4">
					<path d="M15 2C7 3 5 6 4 9L1 8l3 5 3 2-1-3 6-3-5 1c1-4 4-6 8-8z" fill="#187a9a" />
				</svg>
				<svg viewBox="0 0 16 16" className="size-4">
					<circle cx="8" cy="8" r="7" fill="#4f6fd0" stroke="#fff" strokeWidth="1.500" />
					<path d="M5 11V6h6v5M8 6v5" fill="none" stroke="#fff" strokeWidth="1.500" />
				</svg>
				<svg viewBox="0 0 16 16" className="size-4">
					<path d="M6 1h9v7H6zM1 6h8v7H1z" fill="#a9cdf5" stroke="#2d5fa6" />
					<path d="M3 14.500h5" stroke="#dde9f5" strokeWidth="2" />
				</svg>
				<svg viewBox="0 0 16 16" className="size-4">
					<path d="M1 9l7-7 7 6-7 6-6 1z" fill="#ffe23c" stroke="#000" />
					<path d="M4 12l6-6M8 2l7 6" stroke="#000" />
				</svg>
				<time className="flex-1 text-center text-xs">11:08</time>
			</div>
		</div>
	</footer>
);

export default function App() {
	return (
		<div className="relative flex h-screen min-h-[600px] flex-col overflow-hidden bg-[#ece9d8] font-['Liberation_Mono','Noto_Sans_CJK_SC',monospace] text-xs text-black">
			<header className="flex h-[30px] shrink-0 items-center gap-[3px] bg-linear-to-b from-[#7088d4] via-[#8498e6] to-[#82b0ee] pr-0.5 pl-0.5 text-white">
				<CaxaLogo />
				<h1 className="min-w-0 flex-1 overflow-hidden pt-0.5 leading-7 whitespace-nowrap">
					<Mixed
						text="C:\DOCUME~1\ADMINI~1\LOCALS~1\Temp\Rar$DI13.937\00-4排样图.exb - CAXA电子图板2007..."
						latin="text-lg leading-7"
						cjk="text-xl leading-7"
					/>
				</h1>
				<button
					aria-label="最小化"
					className="flex size-6 items-center justify-center rounded-sm border border-[#b4c4f4] bg-[#4468dc]">
					<svg viewBox="0 0 16 16" className="size-4">
						<path d="M2 13h8" stroke="#fff" strokeWidth="3" />
					</svg>
				</button>
				<button
					aria-label="还原"
					className="flex size-6 items-center justify-center rounded-sm border border-[#b4c4f4] bg-[#4468dc]">
					<svg viewBox="0 0 16 16" className="size-4">
						<path d="M5 5V2h10v8h-4M5 2.500h10M1.500 6.500h9v7h-9zM1 7.500h10" fill="none" stroke="#fff" strokeWidth="1.500" />
					</svg>
				</button>
				<button
					aria-label="关闭"
					className="flex size-6 items-center justify-center rounded-sm border border-[#d8b4c8] bg-[#b8616c]">
					<svg viewBox="0 0 16 16" className="size-4">
						<path d="M2 2l12 12M14 2L2 14" stroke="#fff" strokeWidth="3" />
					</svg>
				</button>
			</header>

			<nav className="flex h-[26px] shrink-0 items-center border-b border-[#aca899] pl-[3px] whitespace-nowrap">
				<Grip />
				<div className="flex items-center pl-[7px]">
					{menus.map(([label, key]) => (
						<button key={key} className="w-14 text-left text-[11px]">
							<span className="text-[13px]">{label}</span>(<u>{key}</u>)
						</button>
					))}
					<button className="mr-2.5">
						<Mixed text="CAXA_二次开发小程序" latin="text-[11px]" cjk="text-[13px]" />
					</button>
					<button className="text-[13px]">自定义键盘命令</button>
				</div>
			</nav>

			<div className="flex h-7 shrink-0 items-center border-b border-[#aca899]">
				<Group
					className="w-[268px] pl-0.5"
					names={["新建", "打开", "保存", "|", "打印", "|", "剪切", "复制", "粘贴", "|", "撤销", "重做", "|", "帮助"]}
				/>
				<Group
					className="w-[178px] pl-1"
					names={["智能捕捉", "捕捉过滤", "|", "动态查询", "文字查找", "尺寸查询", "点选择", "拖动图纸"]}
				/>
				<Group
					className="w-[246px] pl-1.5"
					names={["标注", "坐标标注", "|", "倒角标注", "引出说明", "粗糙度", "基准代号", "形位公差", "焊接符号", "剖切符号", "局部放大"]}
				/>
			</div>

			<div className="flex h-7 shrink-0 items-center border-b border-[#85836f]">
				<Group
					className="w-[163px] pl-0.5"
					names={["全屏显示", "|", "图幅设置", "标题栏", "|", "序号", "明细表", "图库"]}
				/>
				<div className="flex h-full w-[326px] items-center border-r border-[#aca899] pl-3">
					<Grip />
					<IconButton name="图层" />
					<div className="mx-1 flex h-5 w-[71px] items-center bg-white">
						<select aria-label="图层" className="h-full min-w-0 flex-1 appearance-none pl-1 outline-none">
							<option>0层</option>
						</select>
						<span className="flex h-4 w-4 items-center justify-center bg-[#ece9d8]">
							<svg viewBox="0 0 8 4" className="h-1 w-2">
								<path d="M0 0h8L4 4z" />
							</svg>
						</span>
					</div>
					<IconButton name="线型" />
					<div className="ml-1 flex h-5 w-[171px] items-center bg-white">
						<span className="ml-0.5 h-px w-[65px] shrink-0 bg-[#f00]" />
						<select
							aria-label="线型"
							className="h-full min-w-0 flex-1 appearance-none pl-3.5 text-[11px] outline-none">
							<option>BYLAYER</option>
						</select>
						<span className="mr-px flex h-4 w-4 items-center justify-center bg-[#ece9d8]">
							<svg viewBox="0 0 8 4" className="h-1 w-2">
								<path d="M0 0h8L4 4z" />
							</svg>
						</span>
					</div>
				</div>
				<Group
					className="w-[201px] pl-1.5"
					names={["重画", "测量", "|", "画笔", "平移", "动态缩放", "窗口缩放", "显示全部", "显示回溯"]}
				/>
			</div>

			<main className="flex min-h-0 flex-1 pr-0.5">
				<div className="flex w-[55px] shrink-0 border-r-2 border-[#85836f]">
					<div className="flex h-[441px] border-b border-[#aca899]">
						<SideBar
							names={["直线", "平行线", "圆", "圆弧", "样条", "点", "椭圆", "矩形", "正多边形", "中心线", "等距线", "公式曲线", "剖面线", "填充", "文字", "|", "块", "提取图符", "标注编辑", "驱动图符"]}
						/>
						<SideBar
							names={["删除", "移动", "平移复制", "镜像", "旋转", "阵列", "缩放", "裁剪", "过渡", "齐边", "拉伸", "打断", "打散", "延伸", "格式刷", "图层转换", "|", "标注修改", "尺寸驱动", "特性匹配"]}
						/>
					</div>
				</div>
				<div className="relative flex-1 overflow-hidden bg-black">
					<Drawing />
				</div>
			</main>

			<div className="mt-0.5 h-[22px] shrink-0 border border-[#aca899]" />
			<div className="flex h-[22px] shrink-0 items-center gap-0.5 pt-0.5 pr-0.5">
				<label htmlFor="cmd" className="pl-0.5 text-[13px]">
					命令:
				</label>
				<input id="cmd" className="min-w-0 flex-1 outline-none" />
				<span className="h-5 w-[90px] border-t border-l border-[#aca899] pl-0.5">
					<Mixed text="际/bf" latin="text-xs" cjk="text-[13px]" />
				</span>
				<span className="h-5 w-[272px] border-t border-l border-[#aca899] pl-0.5 leading-5">
					369.700,397.590
				</span>
				<span className="h-5 w-[74px] border-t border-l border-[#aca899] pl-0.5 text-[13px] leading-5">
					屏 幕 点
				</span>
				<div className="flex h-5 w-[51px] items-center border-t-2 border-l-2 border-[#7f7d70] bg-white">
					<select
						aria-label="捕捉方式"
						className="h-full min-w-0 flex-1 appearance-none text-[13px] outline-none">
						<option>智能</option>
					</select>
					<Arrow />
				</div>
			</div>
			<TaskBar />

			<Dialog />

			<div className="absolute top-[19px] right-[74px] flex size-9 items-center justify-center border-2 border-[#1c2c34] bg-[#137ba6]/90">
				<svg viewBox="0 0 32 32" className="size-8">
					<path d="M29 2C14 5 5 11 5 18l-2 3 8 1 6 8-3-8 5-1 10 4-8-6-10-1c2-7 8-12 18-16z" fill="#f4f8fa" />
				</svg>
			</div>
		</div>
	);
}
